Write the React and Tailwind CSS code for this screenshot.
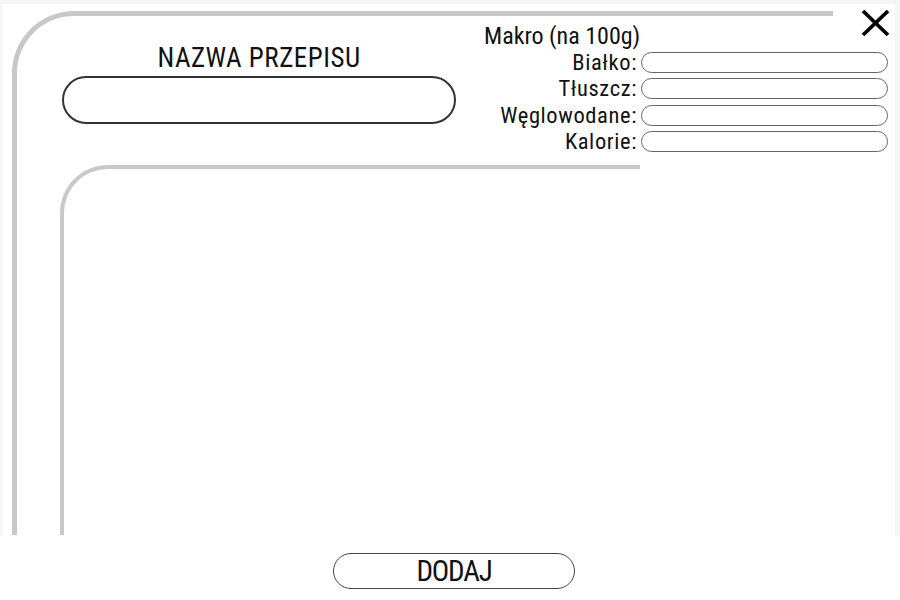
import React from "react";

const macros = ["Białko:", "Tłuszcz:", "Węglowodane:", "Kalorie:"];

const App = () => {
  return (
    <div className="w-[900px] h-[600px] bg-white overflow-hidden font-['Roboto',sans-serif] font-stretch-[85%] text-[#111]">
      {/* Top area */}
      <div className="h-[536px] bg-[#f5f5f5] pt-[4px] pl-[3px] pr-[5px]">
        <div className="h-full bg-white flex items-start">
          {/* Outer frame */}
          <div className="mt-[7px] ml-[9px] w-[821px] h-[524px] border-t-[5px] border-l-[5px] border-[#c8c8c8] rounded-tl-[62px] flex flex-col">
            <div className="flex w-[871px] h-[149px] shrink-0">
              {/* Recipe name */}
              <div className="ml-[45px] w-[394px] flex flex-col items-center">
                <h1 className="mt-[27px] text-[27px] leading-[31px] tracking-[0.5px]">NAZWA PRZEPISU</h1>
                <input className="mt-[2px] w-full h-[48px] rounded-full border-2 border-[#333] outline-none px-5" />
              </div>

              {/* Macros */}
              <div className="ml-auto pt-[7px] grid grid-cols-[153px_247px] grid-rows-[29px_26.33px_26.33px_26.33px_26.33px] gap-x-[4px]">
                <div className="text-right text-[24px] leading-[26px] whitespace-nowrap">Makro (na 100g)</div>
                <div />
                {macros.map((m) => (
                  <React.Fragment key={m}>
                    <div className="text-right text-[22.5px] leading-[21px] tracking-[0.6px] whitespace-nowrap">{m}</div>
                    <input className="h-[21px] w-full rounded-full border border-[#666] outline-none px-2" />
                  </React.Fragment>
                ))}
              </div>
            </div>

            {/* Ingredients frame */}
            <div className="ml-[43px] w-[580px] flex-1 border-t-4 border-l-4 border-[#c8c8c8] rounded-tl-[48px]" />
          </div>

          {/* Close */}
          <button className="ml-[28px] mt-[5px] w-[29px] h-[28px]">
            <svg width="29" height="28" viewBox="0 0 29 28">
              <line x1="2" y1="2" x2="27" y2="26" stroke="#000" strokeWidth="3.8" />
              <line x1="27" y1="2" x2="2" y2="26" stroke="#000" strokeWidth="3.8" />
            </svg>
          </button>
        </div>
      </div>

      {/* Footer */}
      <div className="flex justify-center pl-[8px] pt-[17px]">
        <button className="w-[242px] h-[36px] rounded-full border-[1.5px] border-[#444] text-[29px] leading-[32px] tracking-[-1.2px]">
          DODAJ
        </button>
      </div>
    </div>
  );
};

export default App;
